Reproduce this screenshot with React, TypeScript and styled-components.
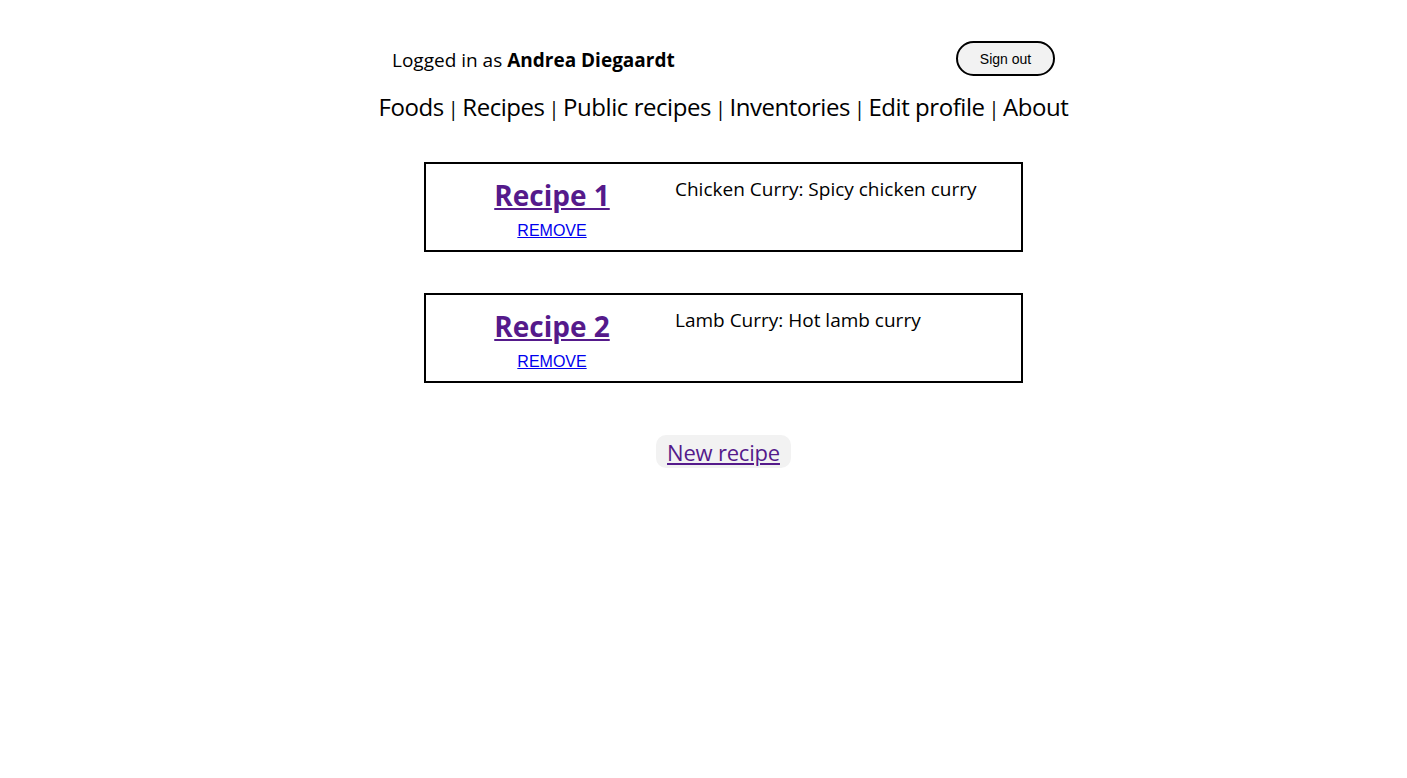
import React from "react";
import styled, { createGlobalStyle } from "styled-components";

const Global = createGlobalStyle`
  html, body { margin: 0; padding: 0; background: #fff; }
  body { font-family: "Open Sans", "Noto Sans", sans-serif; color: #000; }
`;

const Page = styled.div`
  padding: 41px 0 0 40px;
  display: flex;
  flex-direction: column;
  align-items: center;
`;

const Header = styled.div`
  width: 663px;
  display: flex;
  justify-content: space-between;
  align-items: center;
`;

const LoggedIn = styled.div`
  font-size: 19px;
  line-height: 24px;
  padding-top: 2px;
  & b { font-weight: 700; }
`;

const SignOut = styled.button`
  width: 99px;
  height: 35px;
  border: 2px solid #000;
  border-radius: 18px;
  background: #f2f2f2;
  font-family: "Liberation Sans", Arial, sans-serif;
  font-size: 14px;
  color: #000;
  padding: 0;
`;

const Nav = styled.nav`
  margin-top: 14px;
  font-size: 24px;
  letter-spacing: -0.45px;
  line-height: 34px;
  white-space: nowrap;
`;

const NavLink = styled.span`
  color: #000;
`;

const Sep = styled.span`
  font-size: 20px;
  margin: 0 4px;
`;

const List = styled.div`
  margin-top: 36px;
  display: flex;
  flex-direction: column;
  gap: 41px;
`;

const Card = styled.div`
  width: 595px;
  height: 86px;
  border: 2px solid #000;
  display: grid;
  grid-template-columns: 252px 1fr;
`;

const Left = styled.div`
  display: flex;
  flex-direction: column;
  align-items: center;
  padding-top: 12px;
`;

const Title = styled.a`
  font-size: 28px;
  line-height: 38px;
  font-weight: 700;
  color: #551a8b;
  text-decoration: underline;
`;

const Remove = styled.a`
  font-family: "Liberation Sans", Arial, sans-serif;
  font-size: 16px;
  line-height: 20px;
  color: #0000ee;
  text-decoration: underline;
  margin-top: 7px;
`;

const Desc = styled.div`
  font-size: 19px;
  line-height: 26px;
  padding-top: 12px;
  margin-left: -3px;
`;

const NewWrap = styled.div`
  margin-top: 52px;
`;

const NewButton = styled.a`
  display: inline-block;
  background: #f2f2f2;
  border-radius: 10px;
  padding: 2px 11px 1px;
  font-size: 22px;
  letter-spacing: -0.2px;
  line-height: 30px;
  color: #551a8b;
  text-decoration: underline;
`;

const links = ["Foods", "Recipes", "Public recipes", "Inventories", "Edit profile", "About"];
const recipes = [
  { title: "Recipe 1", desc: "Chicken Curry: Spicy chicken curry" },
  { title: "Recipe 2", desc: "Lamb Curry: Hot lamb curry" },
];

export default function App() {
  return (
    <>
      <Global />
      <Page>
        <Header>
          <LoggedIn>
            Logged in as <b>Andrea Diegaardt</b>
          </LoggedIn>
          <SignOut>Sign out</SignOut>
        </Header>
        <Nav>
          {links.map((l, i) => (
            <React.Fragment key={l}>
              {i > 0 && <Sep>|</Sep>}
              <NavLink>{l}</NavLink>
            </React.Fragment>
          ))}
        </Nav>
        <List>
          {recipes.map((r) => (
            <Card key={r.title}>
              <Left>
                <Title href="#">{r.title}</Title>
                <Remove href="#">REMOVE</Remove>
              </Left>
              <Desc>{r.desc}</Desc>
            </Card>
          ))}
        </List>
        <NewWrap>
          <NewButton href="#">New recipe</NewButton>
        </NewWrap>
      </Page>
    </>
  );
}
